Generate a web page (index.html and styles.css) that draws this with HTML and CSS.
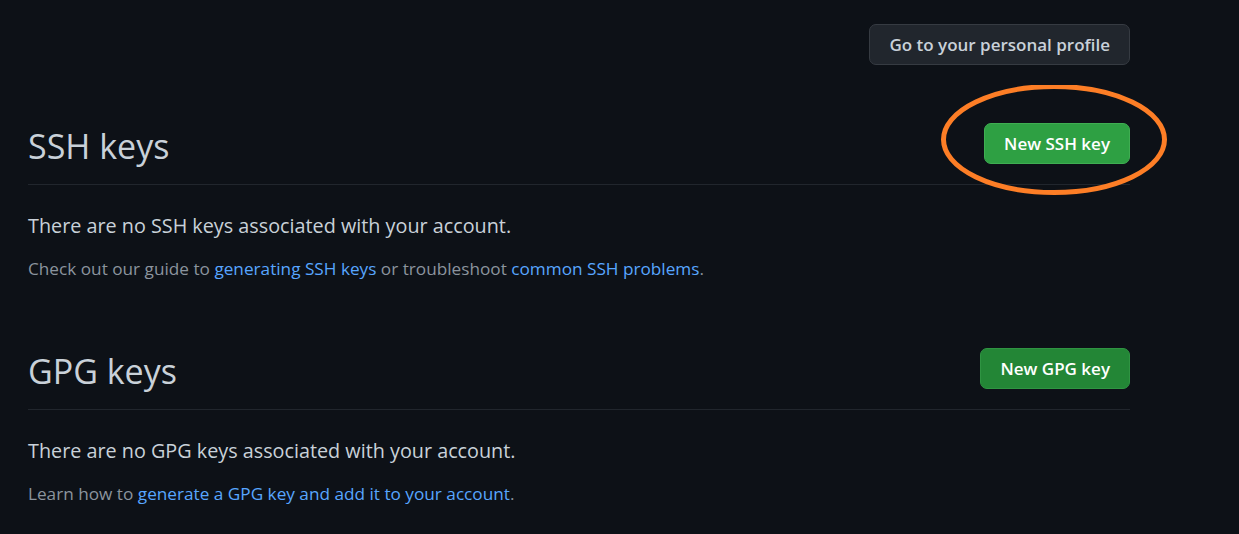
FILE: index.html
```html
<!DOCTYPE html>
<html lang="en">
<head>
<meta charset="utf-8">
<title>SSH and GPG keys</title>
<link rel="stylesheet" href="styles.css">
</head>
<body>
<div class="page">
  <div class="top-actions">
    <a class="btn" href="#">Go to your personal profile</a>
  </div>

  <section class="section">
    <div class="subhead">
      <h2 class="subhead-title">SSH keys</h2>
      <a class="btn btn-primary btn-hover" href="#">New SSH key</a>
      <svg class="annotation" width="232" height="114" viewBox="0 0 232 114" aria-hidden="true">
        <ellipse cx="116" cy="54.5" rx="110.5" ry="53" fill="none" stroke="#fd7e26" stroke-width="5"/>
      </svg>
    </div>
    <p class="blank">There are no SSH keys associated with your account.</p>
    <p class="note">Check out our guide to <a href="#">generating SSH keys</a> or troubleshoot <a href="#">common SSH problems</a>.</p>
  </section>

  <section class="section">
    <div class="subhead">
      <h2 class="subhead-title">GPG keys</h2>
      <a class="btn btn-primary" href="#">New GPG key</a>
    </div>
    <p class="blank">There are no GPG keys associated with your account.</p>
    <p class="note">Learn how to <a href="#">generate a GPG key and add it to your account</a>.</p>
  </section>
</div>
</body>
</html>
```

FILE: styles.css
```css
html, body {
  margin: 0;
  padding: 0;
  background: #0d1117;
}

body {
  font-family: "Open Sans", "Noto Sans", "Liberation Sans", sans-serif;
  color: #c9d1d9;
}

.page {
  width: 1102px;
  margin-left: 28px;
  padding-top: 24px;
}

.top-actions {
  display: flex;
  justify-content: flex-end;
}

.btn {
  display: inline-flex;
  align-items: center;
  box-sizing: border-box;
  height: 41px;
  padding: 0 19px;
  border: 1px solid #363b42;
  border-radius: 7px;
  background: #21262d;
  color: #c9d1d9;
  font-size: 17px;
  font-weight: 600;
  text-decoration: none;
  white-space: nowrap;
}

.btn-primary {
  background: #238636;
  border-color: #2f9442;
  color: #ffffff;
}

.btn-hover {
  background: #2ea043;
  border-color: #3fae52;
}

.section {
  margin-top: 58px;
}

.section + .section {
  margin-top: 66px;
}

.subhead {
  position: relative;
  display: flex;
  align-items: center;
  justify-content: space-between;
  padding-bottom: 20px;
  border-bottom: 1px solid #21262d;
}

.subhead-title {
  margin: 0;
  height: 41px;
  line-height: 47px;
  font-size: 34px;
  font-weight: 400;
  color: #c9d1d9;
}

.annotation {
  position: absolute;
  right: -40px;
  top: -38px;
}

.blank {
  margin: 26px 0 0;
  font-size: 19.8px;
  line-height: 30px;
  color: #c9d1d9;
}

.note {
  margin: 15px 0 0;
  font-size: 17.2px;
  line-height: 26px;
  color: #8b949e;
}

.note a {
  color: #58a6ff;
  text-decoration: none;
}
```
